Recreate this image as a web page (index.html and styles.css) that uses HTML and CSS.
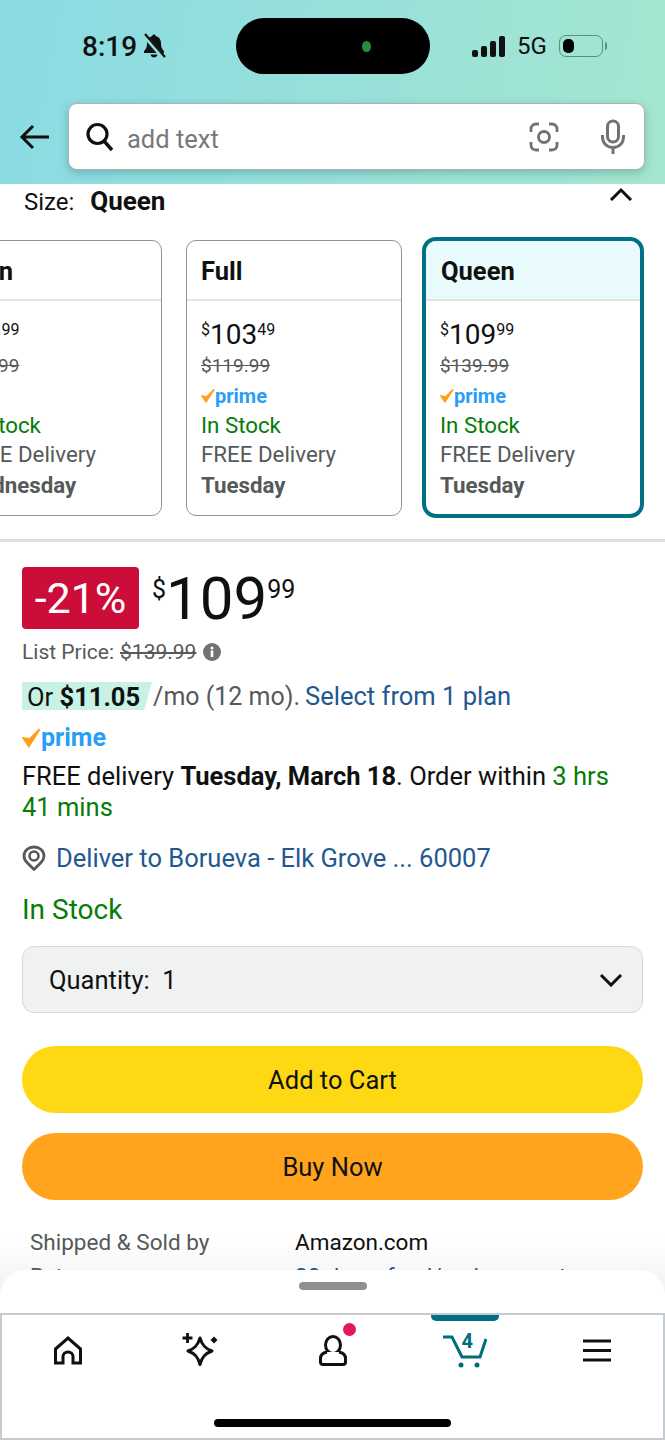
FILE: index.html
```html
<!DOCTYPE html>
<html lang="en">

<head>
    <meta charset="UTF-8">
    <meta name="viewport" content="width=device-width, initial-scale=1.0">
    <title>Amazon product</title>
    <link rel="stylesheet" href="styles.css">
</head>

<body>
    <div class="page">
        <!-- Status bar and search -->
        <header class="top">
            <div class="status">
                <div class="status-left">
                    <span class="clock">8:19</span>
                    <svg class="bell" width="24" height="26" viewBox="0 0 24 26"><path d="M12 1.500c-1 0-1.700.7-1.800 1.600C7 4 5 6.500 5 10c0 4-.8 6-3 8.200V20h20v-1.800c-2.200-2.200-3-4.200-3-8.200 0-3.500-2-6-5.200-6.900-.1-.9-.8-1.600-1.800-1.600zM8.500 21.500c.4 1.800 1.800 3 3.500 3s3.100-1.200 3.500-3z" fill="#111"/><path d="M2.500 2.500l19 22" stroke="#8fdfdc" stroke-width="4.500"/><path d="M3 1l20 23" stroke="#111" stroke-width="2.200"/></svg>
                </div>
                <div class="island"><span class="island-dot"></span></div>
                <div class="status-right">
                    <span class="signal"><i class="s1"></i><i class="s2"></i><i class="s3"></i><i class="s4"></i></span>
                    <span class="net">5G</span>
                    <span class="battery"><span class="battery-fill"></span></span>
                    <span class="battery-cap"></span>
                </div>
            </div>
            <div class="search-row">
                <svg class="back" width="32" height="26" viewBox="0 0 32 26"><path d="M30 13H3M14 2L3 13l11 11" fill="none" stroke="#0f1111" stroke-width="3"/></svg>
                <div class="search">
                    <svg width="30" height="32" viewBox="0 0 30 32"><circle cx="12.500" cy="13" r="9.500" fill="none" stroke="#0f1111" stroke-width="3.200"/><path d="M19 20l8 9" stroke="#0f1111" stroke-width="3.400"/></svg>
                    <span class="search-text">add text</span>
                    <svg class="lens" width="30" height="30" viewBox="0 0 30 30"><path d="M2 10V7c0-3 2-5 5-5h3M20 2h3c3 0 5 2 5 5v3M28 20v3c0 3-2 5-5 5h-3M10 28H7c-3 0-5-2-5-5v-3" fill="none" stroke="#6f7373" stroke-width="2.800"/><circle cx="15" cy="15" r="5.500" fill="none" stroke="#6f7373" stroke-width="2.800"/></svg>
                    <svg class="mic" width="26" height="36" viewBox="0 0 26 36"><rect x="7.500" y="2" width="11" height="21" rx="5.500" fill="none" stroke="#6f7373" stroke-width="3"/><path d="M2.500 16v2c0 6 4.500 10.500 10.500 10.500S23.500 24 23.500 18v-2M13 29v6" fill="none" stroke="#6f7373" stroke-width="3"/></svg>
                </div>
            </div>
        </header>

        <div class="size-row">
            <span class="size-label">Size:</span>
            <b>Queen</b>
            <svg class="collapse" width="24" height="14" viewBox="0 0 24 14"><path d="M2 13L12 3l10 10" fill="none" stroke="#0f1111" stroke-width="3"/></svg>
        </div>

        <!-- Size cards, first one runs off the left edge -->
        <div class="cards">
            <div class="card">
                <div class="card-head">Twin</div>
                <div class="card-body">
                    <div class="card-price"><sup>$</sup>89<sup>99</sup></div>
                    <div class="card-list">$99.99</div>
                    <div class="card-prime"></div>
                    <div class="card-stock">In Stock</div>
                    <div class="card-line">FREE Delivery</div>
                    <div class="card-line"><b>Wednesday</b></div>
                </div>
            </div>
            <div class="card">
                <div class="card-head">Full</div>
                <div class="card-body">
                    <div class="card-price"><sup>$</sup>103<sup>49</sup></div>
                    <div class="card-list">$119.99</div>
                    <div class="card-prime prime"><svg width="14" height="16" viewBox="0 0 14 16"><path d="M1 8l4 6L13 1.500 5.500 9z" fill="#ff9f1c" stroke="#ff9f1c" stroke-width="1.500"/></svg>prime</div>
                    <div class="card-stock">In Stock</div>
                    <div class="card-line">FREE Delivery</div>
                    <div class="card-line"><b>Tuesday</b></div>
                </div>
            </div>
            <div class="card card-on">
                <div class="card-head">Queen</div>
                <div class="card-body">
                    <div class="card-price"><sup>$</sup>109<sup>99</sup></div>
                    <div class="card-list">$139.99</div>
                    <div class="card-prime prime"><svg width="14" height="16" viewBox="0 0 14 16"><path d="M1 8l4 6L13 1.500 5.500 9z" fill="#ff9f1c" stroke="#ff9f1c" stroke-width="1.500"/></svg>prime</div>
                    <div class="card-stock">In Stock</div>
                    <div class="card-line">FREE Delivery</div>
                    <div class="card-line"><b>Tuesday</b></div>
                </div>
            </div>
        </div>

        <main class="buy">
            <div class="price-row">
                <span class="deal">-21%</span>
                <span class="price"><sup>$</sup>109<sup>99</sup></span>
            </div>
            <div class="list-price">List Price: <s>$139.99</s>
                <svg width="20" height="20" viewBox="0 0 20 20"><circle cx="10" cy="10" r="9" fill="#6f7373"/><rect x="8.700" y="8.500" width="2.600" height="6.500" fill="#fff"/><circle cx="10" cy="6" r="1.500" fill="#fff"/></svg>
            </div>
            <div class="monthly"><span class="monthly-tag">Or <b>$11.05</b></span><span class="muted">/mo (12 mo).</span><a>Select from 1 plan</a></div>
            <div class="big-prime prime"><svg width="19" height="22" viewBox="0 0 14 16"><path d="M1 8l4 6L13 1.500 5.500 9z" fill="#ff9f1c" stroke="#ff9f1c" stroke-width="1.500"/></svg>prime</div>
            <p class="delivery">FREE delivery <b>Tuesday, March 18</b>. Order within <span class="green">3 hrs<br>41 mins</span></p>
            <div class="deliver-to">
                <svg width="24" height="26" viewBox="0 0 24 26"><path d="M12 2C6.500 2 2 5.800 2 11c0 2.500 1 4.500 3 6.500l7 7 7-7c2-2 3-4 3-6.500 0-5.200-4.500-9-10-9z" fill="none" stroke="#565959" stroke-width="2.800" stroke-linejoin="round"/><circle cx="12" cy="11" r="4.500" fill="none" stroke="#565959" stroke-width="2.600"/></svg>
                <a>Deliver to Borueva - Elk Grove ... 60007</a>
            </div>
            <div class="stock">In Stock</div>
            <div class="qty">
                <span>Quantity:&nbsp; 1</span>
                <svg width="24" height="14" viewBox="0 0 24 14"><path d="M2 2l10 10L22 2" fill="none" stroke="#0f1111" stroke-width="3"/></svg>
            </div>
            <div class="btn btn-cart">Add to Cart</div>
            <div class="btn btn-buy">Buy Now</div>
            <div class="info-row info-first"><span class="info-key">Shipped &amp; Sold by</span><span>Amazon.com</span></div>
            <div class="info-row"><span class="info-key">Returns</span><a>30-day refund/replacement</a></div>
        </main>

        <!-- Bottom sheet sits over the content -->
        <div class="sheet-fade"></div>
        <div class="sheet">
            <div class="handle"></div>
            <nav class="tabs">
                <div class="tab">
                    <svg width="30" height="29" viewBox="0 0 30 29"><path d="M2.500 13L15 2l12.500 11v14H20v-6.500c0-2.500-2-4.500-5-4.500s-5 2-5 4.500V27H2.500z" fill="none" stroke="#0f1111" stroke-width="3"/></svg>
                </div>
                <div class="tab">
                    <svg width="37" height="36" viewBox="0 0 37 36"><path d="M18 6c2 7 5 10.500 12 13-7 2.500-10 6-12 13.500-2-7.500-5-11-12-13.500 7-2.500 10-6 12-13z" fill="none" stroke="#0f1111" stroke-width="3" stroke-linejoin="round"/><path d="M5.500 1v10M.5 6h10" stroke="#0f1111" stroke-width="2.800"/><path d="M32 4.500l3.500 3.500-3.500 3.500L28.500 8z" fill="#0f1111"/></svg>
                </div>
                <div class="tab tab-user">
                    <svg width="28" height="31" viewBox="0 0 28 31"><ellipse cx="14" cy="10" rx="7.500" ry="8.500" fill="none" stroke="#0f1111" stroke-width="3"/><path d="M8 17c-4 .8-6.500 3-6.500 6.500V27c0 1.500 1 2.500 2.500 2.500h20c1.500 0 2.500-1 2.500-2.500v-3.500c0-3.500-2.500-5.700-6.500-6.500" fill="#fff" stroke="#0f1111" stroke-width="3"/></svg>
                    <span class="dot"></span>
                </div>
                <div class="tab tab-cart">
                    <span class="tab-mark"></span>
                    <svg width="44" height="36" viewBox="0 0 44 36"><path d="M0 5h9l10 20h18l6-18" fill="none" stroke="#006c7e" stroke-width="3"/><circle cx="18" cy="33" r="2.500" fill="#006c7e"/><circle cx="34" cy="33" r="2.500" fill="#006c7e"/></svg>
                    <span class="cart-count">4</span>
                </div>
                <div class="tab">
                    <svg width="30" height="23" viewBox="0 0 30 23"><path d="M1 2h28M1 11.500h28M1 21h28" stroke="#0f1111" stroke-width="3.200"/></svg>
                </div>
            </nav>
            <div class="home-bar"></div>
        </div>
    </div>
</body>

</html>
```
FILE: styles.css
```css
* {
    box-sizing: border-box;
}

body {
    margin: 0;
    font-family: Roboto, "Noto Sans", sans-serif;
    color: #0f1111;
    background: #fff;
}

a {
    color: #22588f;
}

sup {
    vertical-align: baseline;
    position: relative;
}

.page {
    position: relative;
    width: 665px;
    height: 1440px;
    overflow: hidden;
}

/* Top */
.top {
    height: 184px;
    background: linear-gradient(100deg, #8adbe4 0%, #a5e6d0 100%);
}

.status {
    display: flex;
    align-items: flex-start;
    height: 75px;
    padding-top: 18px;
}

.status-left {
    display: flex;
    align-items: center;
    gap: 5px;
    width: 236px;
    height: 56px;
    padding-left: 82px;
}

.clock {
    font-size: 28px;
    font-weight: 500;
}

.island {
    display: flex;
    align-items: center;
    justify-content: flex-end;
    width: 194px;
    height: 56px;
    padding-right: 59px;
    background: #000;
    border-radius: 28px;
}

.island-dot {
    width: 9px;
    height: 11px;
    border-radius: 50%;
    background: #2a8a3e;
}

.status-right {
    display: flex;
    align-items: center;
    height: 56px;
    padding-left: 42px;
}

.signal {
    display: flex;
    align-items: flex-end;
    gap: 3px;
    height: 21px;
}

.signal i {
    width: 6px;
    background: #111;
    border-radius: 2px;
}

.s1 { height: 7px; }
.s2 { height: 11px; }
.s3 { height: 16px; }
.s4 { height: 21px; }

.net {
    margin-left: 12px;
    font-size: 24px;
}

.battery {
    display: flex;
    align-items: center;
    width: 44px;
    height: 22px;
    margin-left: 12px;
    padding: 2px 3px;
    border: 1.500px solid #5f8d80;
    border-radius: 7px;
}

.battery-fill {
    width: 11px;
    height: 14px;
    background: #000;
    border-radius: 5px;
}

.battery-cap {
    width: 2px;
    height: 8px;
    margin-left: 2px;
    background: #5f8d80;
    border-radius: 0 3px 3px 0;
}

.search-row {
    display: flex;
    align-items: center;
    gap: 17px;
    padding: 28px 20px 0 19px;
}

.search {
    display: flex;
    align-items: center;
    flex: 1;
    height: 67px;
    padding: 0 18px 0 16px;
    background: #fff;
    border: 1px solid #a9b5b5;
    border-radius: 9px;
    box-shadow: 0 3px 8px rgba(0, 60, 60, 0.25);
}

.search-text {
    flex: 1;
    margin-left: 12px;
    padding-top: 4px;
    font-size: 25.500px;
    color: #767979;
}

.lens {
    margin-right: 41px;
}

/* Size */
.size-row {
    position: relative;
    height: 56px;
    padding: 3px 0 0 24px;
    font-size: 24px;
    line-height: 29px;
}

.size-row b {
    font-size: 26px;
}

.size-label {
    margin-right: 10px;
}

.collapse {
    position: absolute;
    top: 3px;
    right: 32px;
}

.cards {
    display: flex;
    align-items: flex-start;
    gap: 24px;
    height: 302px;
    margin-left: -54px;
    border-bottom: 3px solid #dcdfdf;
}

.card {
    flex: none;
    width: 216px;
    height: 276px;
    border: 1.500px solid #8f9393;
    border-radius: 10px;
    overflow: hidden;
}

.card-on {
    width: 222px;
    height: 281px;
    margin: -3px 0 0 -4px;
    border: 4px solid #007185;
    border-radius: 14px;
}

.card-on .card-head {
    padding-left: 15px;
    background: #e9fbfd;
}

.card-head {
    height: 60px;
    padding-left: 14px;
    border-bottom: 2px solid #e2e4e4;
    font-size: 25.500px;
    font-weight: 700;
    line-height: 60px;
}

.card:first-child .card-head {
    padding-left: 11px;
}

.card-body {
    padding: 15px 0 0 14px;
    color: #565959;
    font-size: 22.300px;
    line-height: 31px;
}

.card-price {
    height: 37px;
    font-size: 28px;
    line-height: 37px;
    color: #0f1111;
}

.card-price sup {
    top: -9px;
    font-size: 16px;
}

.card-list {
    height: 26px;
    font-size: 19px;
    line-height: 26px;
    text-decoration: line-through;
}

.card-prime {
    height: 31px;
    padding-top: 2px;
}

.prime {
    display: flex;
    align-items: center;
    font-weight: 700;
    color: #2a9df4;
    font-size: 20px;
    line-height: 30px;
}

.card-stock {
    height: 29px;
    color: #067d06;
}

/* Buy box */
.buy {
    padding: 25px 22px 0;
    font-size: 25.500px;
}

.price-row {
    display: flex;
    align-items: flex-start;
    gap: 13px;
    height: 62px;
}

.deal {
    width: 117px;
    height: 62px;
    background: #cc0c39;
    border-radius: 4px;
    color: #fff;
    font-size: 43px;
    line-height: 62px;
    text-align: center;
}

.price {
    font-size: 60px;
    line-height: 64px;
}

.price sup {
    top: -21px;
    font-size: 25px;
}

.list-price {
    display: flex;
    align-items: center;
    gap: 6px;
    height: 30px;
    margin-top: 8px;
    font-size: 21px;
    color: #565959;
}

.monthly {
    display: flex;
    align-items: center;
    height: 36px;
    margin-top: 11px;
}

.monthly-tag {
    height: 28px;
    padding: 0 12px 0 5px;
    background: #c8f2e3;
    clip-path: polygon(0 0, 100% 0, 94% 100%, 0 100%);
    line-height: 30px;
}

.muted {
    margin: 0 5px 0 1px;
    font-size: 25px;
    color: #565959;
}

.big-prime {
    height: 34px;
    margin-top: 7px;
    font-size: 25px;
}

.delivery {
    margin: 6px 0 0;
    line-height: 31px;
}

.green {
    color: #067d06;
}

.deliver-to {
    display: flex;
    align-items: center;
    gap: 10px;
    height: 36px;
    margin-top: 17px;
}

.stock {
    margin-top: 16px;
    font-size: 28px;
    line-height: 36px;
    color: #067d06;
}

.qty {
    display: flex;
    align-items: center;
    justify-content: space-between;
    height: 67px;
    margin-top: 18px;
    padding: 0 19px 0 26px;
    background: #f0f2f2;
    border: 1px solid #d5d9d9;
    border-radius: 12px;
}

.btn {
    height: 67px;
    border-radius: 34px;
    line-height: 68px;
    text-align: center;
}

.btn-cart {
    margin-top: 33px;
    background: #ffd814;
}

.btn-buy {
    margin-top: 20px;
    background: #ffa41c;
}

.info-row {
    display: flex;
    height: 34px;
    padding-left: 8px;
    font-size: 22.500px;
    line-height: 31px;
}

.info-first {
    margin-top: 27px;
}

.info-key {
    width: 265px;
    color: #565959;
}

/* Bottom sheet */
.sheet-fade {
    position: absolute;
    left: 0;
    right: 0;
    top: 1235px;
    height: 65px;
    background: linear-gradient(rgba(0, 0, 0, 0), rgba(0, 0, 0, 0.06));
}

.sheet {
    position: absolute;
    left: 0;
    right: 0;
    top: 1270px;
    bottom: 0;
    background: #fff;
    border-radius: 26px 26px 0 0;
}

.handle {
    width: 68px;
    height: 8px;
    margin: 12px auto 0;
    background: #8f9191;
    border-radius: 4px;
}

.tabs {
    display: flex;
    height: 127px;
    margin-top: 23px;
    padding-top: 17px;
    border: 2px solid #c5cacc;
}

.tab {
    position: relative;
    display: flex;
    justify-content: center;
    align-items: center;
    flex: 1;
    height: 36px;
}

.dot {
    position: absolute;
    top: -9px;
    left: 77px;
    width: 13px;
    height: 13px;
    background: #e0195f;
    border-radius: 50%;
}

.tab-mark {
    position: absolute;
    top: -17px;
    left: 32px;
    width: 68px;
    height: 6px;
    background: #007185;
    border-radius: 0 0 5px 5px;
}

.cart-count {
    position: absolute;
    top: -3px;
    left: 63px;
    font-size: 20px;
    font-weight: 700;
    color: #006c7e;
}

.home-bar {
    position: absolute;
    left: 214px;
    bottom: 13px;
    width: 237px;
    height: 8px;
    background: #000;
    border-radius: 4px;
}
```
